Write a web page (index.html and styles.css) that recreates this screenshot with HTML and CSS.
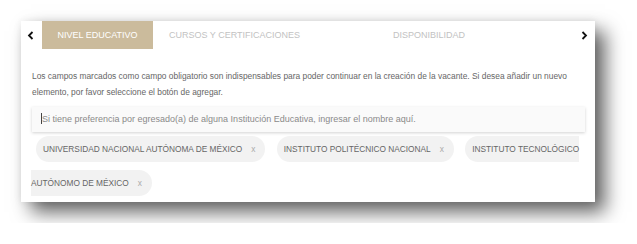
FILE: index.html
```html
<!DOCTYPE html>
<html lang="es">

<head>
    <meta charset="UTF-8">
    <title>Nivel educativo</title>
    <link rel="stylesheet" href="styles.css">
</head>

<body>
    <div class="card">
        <div class="tabs">
            <a href="javascript:;" class="arrow prev">
                <svg width="7" height="9" viewBox="0 0 7 9"><polyline points="5.5,1 2,4.5 5.5,8" fill="none" stroke="#111" stroke-width="1.8"/></svg>
            </a>
            <a href="javascript:;" class="tab active">NIVEL EDUCATIVO</a>
            <a href="javascript:;" class="tab">CURSOS Y CERTIFICACIONES</a>
            <a href="javascript:;" class="tab wide">DISPONIBILIDAD</a>
            <span class="spacer"></span>
            <a href="javascript:;" class="arrow next">
                <svg width="7" height="9" viewBox="0 0 7 9"><polyline points="1.5,1 5,4.5 1.5,8" fill="none" stroke="#111" stroke-width="1.8"/></svg>
            </a>
        </div>
        <p class="note">Los campos marcados como campo obligatorio son indispensables para poder continuar en la creación de la vacante. Si desea añadir un nuevo elemento, por favor seleccione el botón de agregar.</p>
        <div class="search">
            <span class="caret"></span>Si tiene preferencia por egresado(a) de alguna Institución Educativa, ingresar el nombre aquí.
        </div>
        <div class="chips">
            <span class="chip">UNIVERSIDAD NACIONAL AUTÓNOMA DE MÉXICO<em>x</em></span>
            <span class="chip">INSTITUTO POLITÉCNICO NACIONAL<em>x</em></span>
            <span class="chip">INSTITUTO TECNOLÓGICO AUTÓNOMO DE MÉXICO<em>x</em></span>
        </div>
    </div>
</body>

</html>
```

FILE: styles.css
```css
* {
    margin: 0;
    padding: 0;
    box-sizing: border-box;
}

body {
    background: #fff;
    font-family: "Liberation Sans", Arial, sans-serif;
    padding: 21px;
}

a {
    text-decoration: none;
}

.card {
    width: 574px;
    height: 181px;
    background: #fff;
    box-shadow: 10px 10px 18px rgba(0, 0, 0, .62), 0 0 8px rgba(0, 0, 0, .08);
    overflow: hidden;
}

.tabs {
    display: flex;
    align-items: center;
    height: 28px;
}

.arrow {
    display: flex;
    align-items: center;
    height: 28px;
}

.prev {
    width: 21px;
    padding-left: 6px;
}

.next {
    width: 16px;
    padding-left: 2px;
}

.tab {
    height: 28px;
    line-height: 28px;
    font-size: 9px;
    color: #c2c2c2;
    padding: 0 16px;
    white-space: nowrap;
}

.tab.active {
    width: 111px;
    padding: 0;
    background: #cbbb9c;
    color: #fff;
    text-align: center;
}

.tab.wide {
    width: 226px;
    text-align: center;
}

.spacer {
    flex: 1;
}

.note {
    margin: 19px 11px 0;
    font-size: 8.4px;
    line-height: 16px;
    color: #666;
}

.search {
    margin: 7px 10px 0 11px;
    height: 25px;
    line-height: 25px;
    padding-left: 9px;
    background: #fafafa;
    box-shadow: 0 1px 3px rgba(0, 0, 0, .18);
    font-size: 9px;
    color: #8a8a8a;
    white-space: nowrap;
}

.caret {
    display: inline-block;
    width: 1px;
    height: 11px;
    background: #444;
    vertical-align: -2px;
}

.chips {
    margin: 0 7px 0 10px;
    line-height: 34px;
    font-size: 8.3px;
    color: #666;
}

.chip {
    background: #f2f2f2;
    padding: 8px 10px 8px 7px;
    margin: 0 4px 0 5px;
    border-radius: 13px;
}

.chip em {
    font-style: normal;
    color: #aaa;
    margin-left: 9px;
}
```
